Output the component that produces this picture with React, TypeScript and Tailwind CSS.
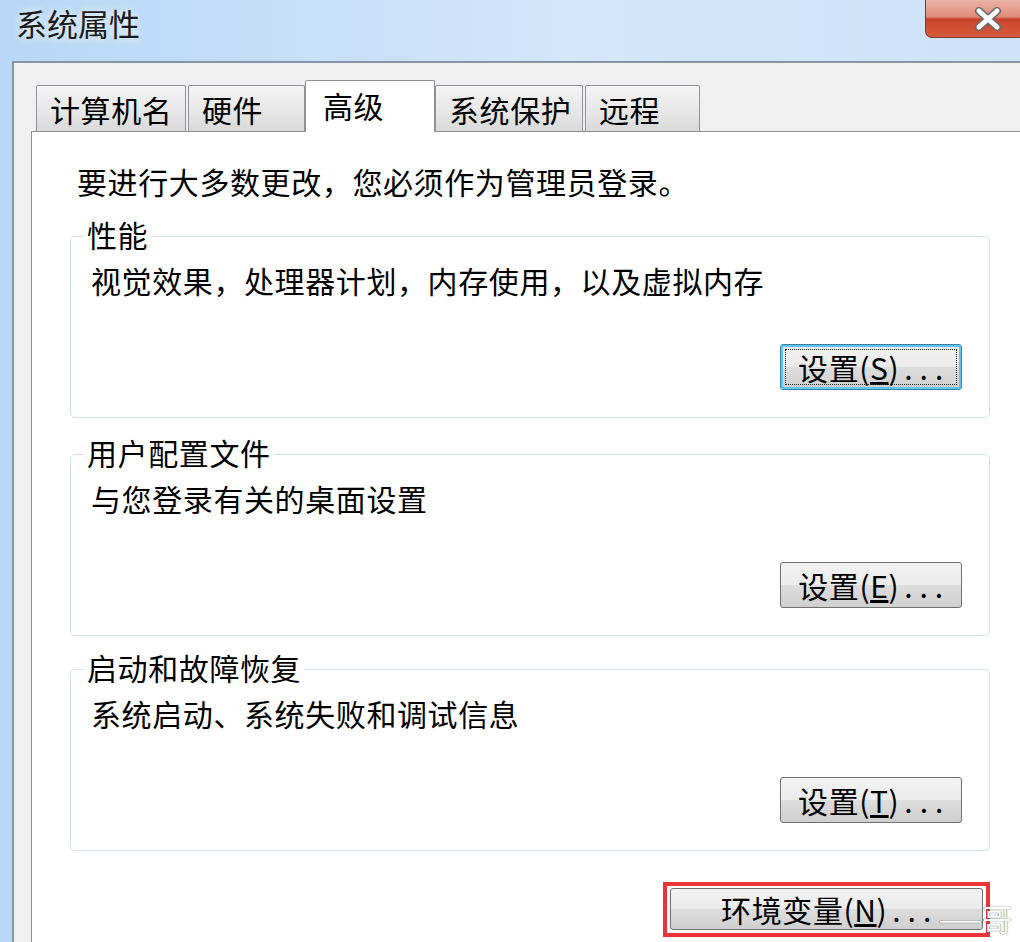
import React from 'react';

const FONT = "font-['Noto_Sans_CJK_SC','Noto_Sans_CJK_JP',sans-serif]";

/** Onglets du dialogue */
const TABS = [
  { label: '计算机名', cls: 'w-[150px] ml-0' },
  { label: '硬件', cls: 'w-[117px] ml-[2px]' },
  { label: '高级', cls: 'w-[130px] ml-0', active: true },
  { label: '系统保护', cls: 'w-[148px] ml-0' },
  { label: '远程', cls: 'w-[115px] ml-[2px]' },
];

const GROUPS = [
  { title: '性能', text: '视觉效果，处理器计划，内存使用，以及虚拟内存', key: 'S', focused: true, mt: 'mt-[37px]' },
  { title: '用户配置文件', text: '与您登录有关的桌面设置', key: 'E', focused: false, mt: 'mt-[36px]' },
  { title: '启动和故障恢复', text: '系统启动、系统失败和调试信息', key: 'T', focused: false, mt: 'mt-[33px]' },
];

function WinButton({ label, hotkey, focused, className }: { label: string; hotkey: string; focused?: boolean; className: string }) {
  return (
    <button
      className={`relative flex items-center justify-center rounded-[3px] border bg-[linear-gradient(#f2f2f2,#ebebeb_50%,#dddddd_50%,#cfcfcf)] text-[30px] leading-none text-black ${
        focused ? 'border-[#3c7fb1] shadow-[inset_0_0_0_2px_#5cc6f0]' : 'border-[#707070]'
      } ${className}`}
    >
      {focused && <span className="pointer-events-none absolute inset-[4px] border border-dotted border-[#222]" />}
      <span>
        {label}(<u>{hotkey}</u>)<span className="ml-[5px] tracking-[7px]">..</span>.
      </span>
    </button>
  );
}

function CloseGlyph() {
  return (
    <svg width="30" height="24" viewBox="0 0 30 24">
      <path d="M6 4 L24 20 M24 4 L6 20" stroke="#6b6b6b" strokeWidth="8" strokeLinecap="round" />
      <path d="M6 4 L24 20 M24 4 L6 20" stroke="#ffffff" strokeWidth="5" strokeLinecap="round" />
    </svg>
  );
}

export default function App() {
  return (
    <div className={`relative flex h-[942px] w-[1020px] flex-col overflow-hidden bg-[linear-gradient(90deg,#b9d7f6,#d3e6fa_55%,#cfe3f8)] tracking-[0.6px] text-black ${FONT}`}>
      {/* Barre de titre */}
      <div className="flex h-[61px] shrink-0 items-start justify-between">
        <div className="pl-[16px] pt-[5px] text-[31px] leading-[36px] tracking-normal text-[#1a1a1a] [text-shadow:0_0_8px_#ffffff]">系统属性</div>
        <div className="flex h-[38px] w-[95px] items-center rounded-bl-[7px] border-b border-l border-[#7b3a2e] bg-[linear-gradient(#ebb3a6,#df8c7a_45%,#c8452c_52%,#d85a3c)] pl-[47px]">
          <CloseGlyph />
        </div>
      </div>

      <div className="flex flex-1">
        <div className="w-[12px] shrink-0" />
        <div className="flex flex-1 flex-col border-l-2 border-t-2 border-[#8796a6] bg-[#f0f0f0] pl-[17px] pt-[17px]">
          {/* Onglets */}
          <div className="relative z-10 flex h-[51px] items-end pl-[5px]">
            {TABS.map((t) =>
              t.active ? (
                <div
                  key={t.label}
                  className={`-mb-px flex h-[52px] items-center rounded-t-[2px] border border-b-0 border-[#8e9197] bg-white pl-[17px] pb-[3px] text-[30px] leading-[36px] ${t.cls}`}
                >
                  {t.label}
                </div>
              ) : (
                <div
                  key={t.label}
                  className={`flex h-[46px] items-center rounded-t-[2px] border border-b-0 border-[#8e9197] bg-[linear-gradient(#f4f4f4,#e6e6e6_60%,#d9d9d9)] pl-[13px] text-[30px] leading-[36px] ${t.cls}`}
                >
                  {t.label}
                </div>
              ),
            )}
          </div>

          {/* Panneau */}
          <div className="flex-1 border-l border-t border-[#8e9197] bg-white pl-[38px] pt-[31px]">
            <div className="ml-[7px] text-[30px] leading-[36px]">要进行大多数更改，您必须作为管理员登录。</div>

            {GROUPS.map((g) => (
              <div
                key={g.title}
                className={`relative flex h-[182px] w-[920px] flex-col justify-between rounded-[5px] border border-[#d5dfe5] pb-[27px] pl-[20px] pr-[27px] pt-[25px] ${g.mt}`}
              >
                <div className="absolute -top-[21px] left-[13px] bg-white px-[3px] text-[30px] leading-[36px]">{g.title}</div>
                <div className="text-[30px] leading-[36px]">{g.text}</div>
                <WinButton label="设置" hotkey={g.key} focused={g.focused} className="h-[46px] w-[182px] self-end" />
              </div>
            ))}

            <div className="mt-[31px] flex w-[920px] justify-end">
              <div className="border-[4px] border-[#ee3338] pb-[3px] pl-[3px] pr-[3px] pt-[2px]">
                <WinButton label="环境变量" hotkey="N" className="h-[42px] w-[313px]" />
              </div>
            </div>
          </div>
        </div>
      </div>

      {/* Filigrane */}
      <div className="absolute bottom-[6px] right-[8px] flex items-center leading-[36px] tracking-normal text-white [text-shadow:0_0_1px_#555,0_0_1px_#555]">
        <span className="text-[26px]">——</span>
        <span className="text-[30px]">哥</span>
      </div>
    </div>
  );
}
